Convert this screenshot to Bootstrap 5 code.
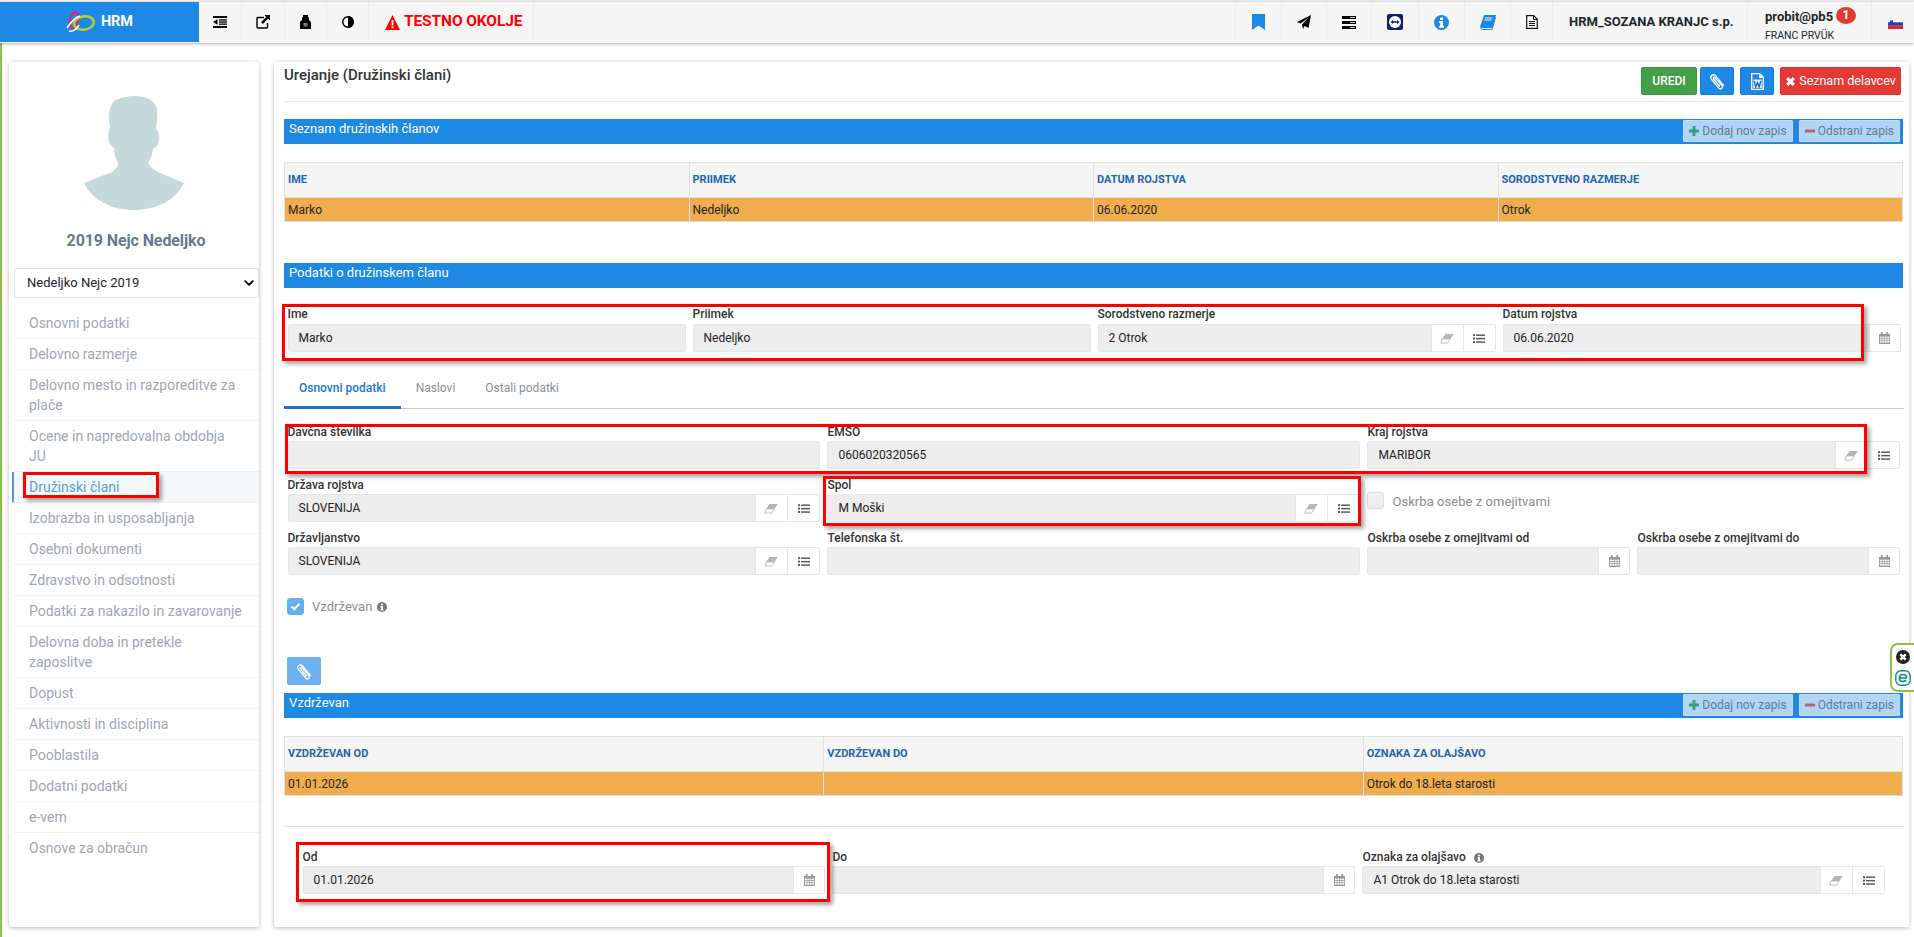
<!DOCTYPE html>
<html lang="sl">
<head>
<meta charset="utf-8">
<title>HRM</title>
<link href="https://cdn.jsdelivr.net/npm/bootstrap@5.3.0/dist/css/bootstrap.min.css" rel="stylesheet">
<style>
html,body{height:100%;overflow:hidden}
body{font-family:Roboto,"Liberation Sans",sans-serif;font-size:12px;color:#212529;background:#fff;padding-top:2px;position:relative}
.edge-top{position:absolute;top:0;left:0;right:0;height:2px;background:#ececec}
.topbar{height:41px;background:#f5f5f5;box-shadow:0 1px 3px rgba(0,0,0,.3);position:relative;z-index:3}
.brand{width:199px;height:40px;background:#1e88e5;color:#fff;font-weight:700;font-size:14.5px;letter-spacing:-.2px;gap:6px;padding-left:66px}
.tool{height:40px;border-right:1px solid #ebebeb;flex:none}
.w43{width:43px}.w42{width:42px}.w45{width:45px}.w46{width:46px}.w47{width:47px}
.warn{width:165px;color:#f00;font-weight:700;font-size:15.5px;gap:4px;padding-left:16px;letter-spacing:-.1px}
.firm{width:195px;font-weight:700;font-size:13px;padding-left:16px;white-space:nowrap}
.usr{width:124px;padding-left:17px;line-height:1;position:relative}
.usr b{font-size:13px;font-weight:700;display:block}
.usr span.who{font-size:10.5px;display:block;margin-top:8px}
.count{position:absolute;left:88px;top:5px;width:20px;height:17px;border-radius:50%;background:#e53935;color:#fff;font-size:12px;font-weight:700;line-height:17px;text-align:center}
.flagcell{width:42px;padding-left:16px;height:40px}
.shell{height:894px;padding:19px 5px 10px 7px;gap:15px;border-left:2px solid #8bc34a}
.sidecard,.maincard{background:#fff;box-shadow:0 1px 4px rgba(0,0,0,.28);height:865px;position:relative;border-radius:2px}
.sidecard{width:250px;flex:none;padding-top:34px}
.maincard{width:1635px;flex:none;padding:0 5px 0 10px}
.avatar{display:block;width:100px;height:114px;margin-left:75px}
.pname{font-size:16px;font-weight:700;color:#69778c;text-align:center;margin:20px 0 0;line-height:22px;letter-spacing:-.1px;padding-left:4px}
.staff{width:245px;height:30px;margin:16px 0 10px 5px;font-size:13px;padding:0 20px 0 12px;border-radius:2px;border-color:#dfe5ea;color:#212529;--bs-form-select-bg-img:none;background-image:url("data:image/svg+xml,%3csvg xmlns='http://www.w3.org/2000/svg' viewBox='0 0 16 16'%3e%3cpath fill='none' stroke='%23000' stroke-linecap='round' stroke-linejoin='round' stroke-width='3' d='m2 5 6 6 6-6'/%3e%3c/svg%3e");background-size:10px 10px;background-position:right 4px center}
.menu{margin-left:5px;border-radius:0}
.menu a{display:block;padding:5px 17px 5px 15px;line-height:20px;font-size:14px;color:#a0a6b4;text-decoration:none;border:0;border-bottom:1px solid #f1f1f1;background:transparent}
.menu a.current{color:#5b9bd5;background:#f5f8fb;border-left:2px solid #5b9bd5;margin-left:-2px}
.pagehead{height:40px;border-bottom:1px solid #e6e6e6;padding-right:3px}
.pagehead h1{font-size:15px;font-weight:500;color:#333;margin:5px 0 0;line-height:16px}
.acts{gap:6px;padding-top:5px}
.act{height:28px;padding:0;border-radius:2px;color:#fff;font-size:12px;border:1px solid transparent;display:inline-flex;align-items:center;justify-content:center}
.a-green{background:#43a047;width:56px;font-weight:500;border-color:#3d9441;margin-right:-3px}
.a-blue{background:#1e88e5;width:34px;border-color:#1b7ed6}
.a-red{background:#e53935;width:121px;border-color:#dd3430;gap:3px;font-size:12.5px}
.bar{height:25px;background:#1e88e5;color:#fff;font-size:13px;padding:0 3px 0 5px;line-height:20px;margin-right:1px}
.b1{margin-top:17px}.b2{margin-top:41px}.b3{margin-top:8px}
.barbtns{gap:6px;padding-top:1px}
.minibtn{height:22px;padding:0 5px;background:#b1d5f6;border:1px solid #c6dcf2;color:#5d7c99;font-size:12px;line-height:20px;border-radius:1px;gap:3px}
.minibtn:disabled{opacity:1;color:#5d7c99;background:#b1d5f6;border-color:#c6dcf2}
.grid-t{margin:18px 0 0;width:calc(100% - 1px);table-layout:fixed;border-color:#e0e0e0;font-size:12px;--bs-table-bg:transparent}
.grid-t th,.grid-t td{border:1px solid #e0e0e0;padding:0 3px;vertical-align:middle}
.grid-t th{height:35px;background:#f5f5f5;color:#1e65ad;font-size:11px;font-weight:700;text-transform:uppercase}
.grid-t td{height:24px;background:#f0ad4e;color:#222}
.fldrow{--bs-gutter-x:7px;margin-left:0;margin-right:0}
.fldrow>div{padding-bottom:8px}
.r1{margin-top:18px}
.r1>div{padding-bottom:0}
.r5{margin:0 15px}
.fld{font-size:12px;font-weight:500;color:#333;margin:0;display:block;line-height:17px;height:17px;white-space:nowrap}
.r1 .fld{height:18px}
.inp{height:28px;min-height:0;background:#ededed;border:1px solid #e2e7eb;border-radius:2px;font-size:12px;color:#222;padding:0 10px;line-height:26px}
.addon{width:33px;height:28px;padding:0;justify-content:center;background:#fff;border:1px solid #e2e7eb;border-radius:2px;flex:none}
.cal{width:32px}
.tabsx{margin-top:17px;border-bottom:1px solid #c8c8c8;margin-bottom:15px;height:40px}
.tabsx .nav-link{border:0;border-radius:0;height:39px;padding:11px 15px 0;color:#8a8f96;font-size:12px;background:transparent;margin:0;line-height:16px}
.tabsx .nav-link.active{color:#1976d2;font-weight:500;background:transparent;border-bottom:3px solid #1976d2;height:40px}
.chk{width:17px;height:17px;border-radius:3px;border:1px solid #ddd;background:#eee;flex:none;display:flex;align-items:center;justify-content:center}
.chk.on{background:#66aeee;border-color:#66aeee}
.chkl{color:#8c8c8c;font-size:13px;margin-left:8px;gap:5px;letter-spacing:.05px}
.oskrba{padding-top:15px}
.vz{margin:15px 0 0 3px;height:17px}
.clipb{width:34px;height:28px;margin:42px 0 0 3px;background:#1e88e5;display:flex;opacity:.65;border-radius:2px;border:0;align-items:center;justify-content:center;padding:0}
.clipb:disabled{background:#1e88e5;opacity:.65}
.sep{margin:30px 0 22px;border:0;border-top:1px solid #e4e4e4;opacity:1}
.ann{position:absolute;border:3px solid #f00;box-shadow:3px 3px 4px rgba(0,0,0,.35);pointer-events:none;z-index:2}
.ann-a{left:8px;top:242px;width:1582px;height:57px}
.ann-b{left:11px;top:362px;width:1582px;height:50px}
.ann-c{left:549px;top:414px;width:538px;height:50px}
.ann-d{left:22px;top:780px;width:534px;height:60px}
.ann-e{left:14px;top:410px;width:136px;height:26px}
.esetwin{position:absolute;right:0;top:643px;width:24px;height:49px;background:#fff;border:2px solid #8bc34a;border-right:0;border-radius:8px 0 0 8px;z-index:4;gap:6px;padding-top:5px}
svg{display:block;flex:none}
</style>
</head>
<body>
<svg width="0" height="0" class="position-absolute">
<defs>
<symbol id="i-eraser" viewBox="0 0 16 12"><path d="M6 1h9l-4 5.5H2z" fill="#b5b5b5"/><path d="M2 6.5h9L8 11H.8z" fill="#fff" stroke="#b5b5b5" stroke-width=".9"/></symbol>
<symbol id="i-list" viewBox="0 0 14 12"><g fill="#555"><rect x="0" y="1" width="2.4" height="2.2"/><rect x="0" y="5" width="2.4" height="2.2"/><rect x="0" y="9" width="2.4" height="2.2"/><rect x="3.6" y="1.3" width="10.4" height="1.7"/><rect x="3.6" y="5.3" width="10.4" height="1.7"/><rect x="3.6" y="9.3" width="10.4" height="1.7"/></g></symbol>
<symbol id="i-cal" viewBox="0 0 12 13"><path fill="#999" d="M0 2h2V0h2v2h4V0h2v2h2v11H0z"/><g fill="#fff"><rect x="1" y="5" width="2" height="1.6"/><rect x="3.7" y="5" width="2" height="1.6"/><rect x="6.4" y="5" width="2" height="1.6"/><rect x="9.1" y="5" width="2" height="1.6"/><rect x="1" y="7.4" width="2" height="1.6"/><rect x="3.7" y="7.4" width="2" height="1.6"/><rect x="6.4" y="7.4" width="2" height="1.6"/><rect x="9.1" y="7.4" width="2" height="1.6"/><rect x="1" y="9.8" width="2" height="1.8"/><rect x="3.7" y="9.8" width="2" height="1.8"/><rect x="6.4" y="9.8" width="2" height="1.8"/><rect x="9.1" y="9.8" width="2" height="1.8"/></g></symbol>
<symbol id="i-clip" viewBox="0 0 16 16"><path fill="none" stroke="#fff" stroke-width="1.3" stroke-linecap="round" d="M13.6 11.6 6.4 2.9C5.2 1.4 3.6 1.4 2.6 2.2s-1.3 2.4-.2 3.8l6.6 8c.8 1 2 1.2 2.9.5s1-1.9.2-2.9L5.8 4.6c-.4-.5-1-.6-1.4-.3s-.4.9 0 1.400l5.400 6.500"/></symbol>
<symbol id="i-info" viewBox="0 0 16 16"><circle cx="8" cy="8" r="8" fill="currentColor"/><rect x="6.4" y="2.6" width="3.2" height="2.7" rx=".4" fill="#fff"/><path fill="#fff" d="M5.5 6.5h4.1v5h1v2h-5v-2h1v-3h-1.1z"/></symbol>
</defs>
</svg>
<div class="edge-top"></div>
<nav class="topbar d-flex align-items-start">
  <a class="brand d-flex align-items-center text-decoration-none">
    <svg width="29" height="22" viewBox="0 0 29 22"><ellipse cx="8" cy="9" rx="4" ry="8" fill="none" stroke="#e91e63" stroke-width="2.2" transform="rotate(12 8 9)"/><ellipse cx="18" cy="12" rx="10" ry="6.6" fill="none" stroke="#b5cf32" stroke-width="2.6" transform="rotate(-8 18 12)"/><path d="M1 17c4-6 9-11 13-12M3 20c4 1 8-2 10-6" fill="none" stroke="#fff" stroke-width="1.6"/></svg>
    <span>HRM</span>
  </a>
  <div class="tool w43 d-flex align-items-center justify-content-center"><svg width="14" height="12" viewBox="0 0 14 12"><g fill="#000"><rect width="14" height="2"/><rect x="6" y="3.3" width="8" height="1.3"/><rect x="6" y="5.4" width="8" height="1.3"/><rect x="6" y="7.5" width="8" height="1.3"/><rect y="10" width="14" height="2"/><path d="M4.5 3.3v5.5L0 6z"/></g></svg></div>
  <div class="tool w43 d-flex align-items-center justify-content-center"><svg width="14" height="14" viewBox="0 0 14 14"><path d="M8 2.5H2a1 1 0 0 0-1 1V12a1 1 0 0 0 1 1h8.5a1 1 0 0 0 1-1V8" fill="none" stroke="#000" stroke-width="1.4"/><path d="M8.5 0H14v5.5l-1.9-1.8L6.8 9 5 7.2l5.3-5.3z" fill="#000"/></svg></div>
  <div class="tool w42 d-flex align-items-center justify-content-center"><svg width="11" height="14" viewBox="0 0 11 14"><path d="M3 0h5v2l1 .8V5l2 2v7H0V7l2-2V2.800L3 2z" fill="#000"/><rect x="3.5" y="8" width="4" height="3.500" fill="#777"/></svg></div>
  <div class="tool w42 d-flex align-items-center justify-content-center"><svg width="12" height="12" viewBox="0 0 12 12"><circle cx="6" cy="6" r="5.200" fill="#fff" stroke="#000" stroke-width="1.400"/><path d="M6 0a6 6 0 0 1 0 12z" fill="#000"/></svg></div>
  <div class="tool warn d-flex align-items-center"><svg width="15" height="15" viewBox="0 0 15 15"><path d="M7.500 0 15 15H0z" fill="#f00"/><rect x="6.600" y="5" width="1.800" height="5.500" fill="#fff"/><rect x="6.600" y="11.500" width="1.800" height="1.800" fill="#fff"/></svg><span>TESTNO OKOLJE</span></div>
  <div class="tool flex-grow-1"></div>
  <div class="tool w46 d-flex align-items-center justify-content-center"><svg width="13" height="16" viewBox="0 0 13 16"><path d="M0 0h13v16l-6.500-4.500L0 16z" fill="#1e88e5"/></svg></div>
  <div class="tool w45 d-flex align-items-center justify-content-center"><svg width="14" height="14" viewBox="0 0 14 14"><path d="M14 0 11.500 13 7.500 11 6 14 5 9.500 11 3 3.500 8.500 0 7z" fill="#000"/></svg></div>
  <div class="tool w45 d-flex align-items-center justify-content-center"><svg width="14" height="13" viewBox="0 0 14 13"><g fill="#000"><rect width="14" height="3"/><rect y="5" width="14" height="3"/><rect y="10" width="14" height="3"/></g><g fill="#ccc"><rect x="8" y="1" width="5" height="1"/><rect x="8" y="6" width="5" height="1"/><rect x="8" y="11" width="5" height="1"/></g></svg></div>
  <div class="tool w47 d-flex align-items-center justify-content-center"><svg width="16" height="16" viewBox="0 0 16 16"><rect width="16" height="16" rx="2" fill="#0e1f6b"/><circle cx="8" cy="8" r="6" fill="#fff"/><path d="M3.500 8 6 6v1.300h4V6l2.500 2L10 10V8.700H6V10z" fill="#0e1f6b"/></svg></div>
  <div class="tool w46 d-flex align-items-center justify-content-center text-primary"><svg width="15" height="15" style="color:#1e88e5"><use href="#i-info"/></svg></div>
  <div class="tool w46 d-flex align-items-center justify-content-center"><svg width="16" height="15" viewBox="0 0 16 15"><path d="M4 0h12l-3 11.500a2 2 0 0 1-2 1.500H1.500C.500 13 0 12 .300 11z" fill="#1e88e5"/><path d="M.500 12.500c0 1 .6 2 1.800 2H12l3.500-12" fill="none" stroke="#1e88e5" stroke-width="1"/><path d="M5 3h7M4.500 5h7" stroke="#fff" stroke-width=".9"/></svg></div>
  <div class="tool w42 d-flex align-items-center justify-content-center"><svg width="12" height="14" viewBox="0 0 12 14"><path d="M.7.700h7L11.300 4.300v9H.7z" fill="#fff" stroke="#111" stroke-width="1.200"/><path d="M7.500 1v3.500H11" fill="none" stroke="#111"/><path d="M3 6.500h6M3 8.500h6M3 10.500h6" stroke="#111"/></svg></div>
  <div class="tool firm d-flex align-items-center">HRM_SOZANA KRANJC s.p.</div>
  <div class="tool usr pt-2">
    <b>probit@pb5</b><span class="who">FRANC PRVÜK</span>
    <span class="count">1</span>
  </div>
  <div class="flagcell d-flex align-items-center"><svg class="mt-1" width="15" height="10" viewBox="0 0 15 10"><rect width="15" height="3.400" fill="#f4f4ff"/><rect y="3.300" width="15" height="3.400" fill="#1c3fbf"/><rect y="6.600" width="15" height="3.400" fill="#e8222c"/><path d="M2 1.500h3v3L3.500 5.500 2 4.500z" fill="#1c3fbf"/></svg></div>
</nav>

<div class="shell d-flex">
  <aside class="sidecard">
    <svg class="avatar" viewBox="0 0 100 114"><path fill="#c5d9dc" d="M50 0C62 0 72 4 73 14 74 22 72 30 72 33 76 36 76 48 72 51 70 52 70 52 69 53 68 60 66 64 64 67 66 71 70 74 74 76L100 87C92 104 72 114 50 114 28 114 8 104 0 87L28 76C31 73 35 70 34 67 32 63 30 58 30 52 26 50 24 45 24 40 24 36 26 33 26 31 24 20 25 8 32 4 38 1 44 0 50 0Z"/></svg>
    <h2 class="pname">2019 Nejc Nedeljko</h2>
    <select class="form-select staff"><option>Nedeljko Nejc 2019</option></select>
    <div class="list-group menu">
      <a href="#">Osnovni podatki</a>
      <a href="#">Delovno razmerje</a>
      <a href="#">Delovno mesto in razporeditve za plače</a>
      <a href="#">Ocene in napredovalna obdobja JU</a>
      <a href="#" class="current">Družinski člani</a>
      <a href="#">Izobrazba in usposabljanja</a>
      <a href="#">Osebni dokumenti</a>
      <a href="#">Zdravstvo in odsotnosti</a>
      <a href="#">Podatki za nakazilo in zavarovanje</a>
      <a href="#">Delovna doba in pretekle zaposlitve</a>
      <a href="#">Dopust</a>
      <a href="#">Aktivnosti in disciplina</a>
      <a href="#">Pooblastila</a>
      <a href="#">Dodatni podatki</a>
      <a href="#">e-vem</a>
      <a href="#" class="border-0">Osnove za obračun</a>
    </div>
    <div class="ann ann-e"></div>
  </aside>

  <main class="maincard">
    <div class="pagehead d-flex justify-content-between">
      <h1>Urejanje (Družinski člani)</h1>
      <div class="acts d-flex">
        <button class="btn act a-green">UREDI</button>
        <button class="btn act a-blue"><svg width="17" height="17"><use href="#i-clip"/></svg></button>
        <button class="btn act a-blue"><svg width="13" height="17" viewBox="0 0 13 17"><path d="M.7.700h8l3.600 3.600v12H.7z" fill="#1e88e5" stroke="#fff" stroke-width="1.300"/><path d="M8 1v4h4z" fill="#fff"/><rect x="2.200" y="6.500" width="8.600" height="8.500" fill="#d8ebfb"/><path d="m3.200 8 1.600 6 1.700-4.500L8.200 14l1.600-6" fill="none" stroke="#0f5fae" stroke-width="1.200"/></svg></button>
        <button class="btn act a-red"><svg width="11" height="11" viewBox="0 0 10 10"><path d="M1 3 3 1l2 2 2-2 2 2-2 2 2 2-2 2-2-2-2 2-2-2 2-2z" fill="#fff"/></svg>Seznam delavcev</button>
      </div>
    </div>

    <div class="bar b1 d-flex justify-content-between">
      <span>Seznam družinskih članov</span>
      <div class="barbtns d-flex">
        <button disabled class="btn minibtn d-flex align-items-center"><svg width="10" height="10" viewBox="0 0 10 10"><path d="M3.600 0h2.800v3.600H10v2.800H6.400V10H3.600V6.400H0V3.600h3.600z" fill="#3a9a7a"/></svg>Dodaj nov zapis</button>
        <button disabled class="btn minibtn d-flex align-items-center"><svg width="10" height="4" viewBox="0 0 10 4"><rect width="10" height="3" y=".5" fill="#b4647c"/></svg>Odstrani zapis</button>
      </div>
    </div>
    <table class="table grid-t mb-0">
      <thead><tr><th>Ime</th><th>Priimek</th><th>Datum rojstva</th><th>Sorodstveno razmerje</th></tr></thead>
      <tbody><tr><td>Marko</td><td>Nedeljko</td><td>06.06.2020</td><td>Otrok</td></tr></tbody>
    </table>

    <div class="bar b2">Podatki o družinskem članu</div>

    <div class="row fldrow r1">
      <div class="col-3"><label class="fld">Ime</label><div class="form-control inp">Marko</div></div>
      <div class="col-3"><label class="fld">Priimek</label><div class="form-control inp">Nedeljko</div></div>
      <div class="col-3"><label class="fld">Sorodstveno razmerje</label>
        <div class="input-group flex-nowrap"><div class="form-control inp">2 Otrok</div><span class="input-group-text addon"><svg width="15" height="11"><use href="#i-eraser"/></svg></span><span class="input-group-text addon"><svg width="12" height="11"><use href="#i-list"/></svg></span></div></div>
      <div class="col-3"><label class="fld">Datum rojstva</label>
        <div class="input-group flex-nowrap"><div class="form-control inp">06.06.2020</div><span class="input-group-text addon cal"><svg width="11" height="12"><use href="#i-cal"/></svg></span></div></div>
    </div>

    <ul class="nav nav-tabs tabsx">
      <li class="nav-item"><a class="nav-link active" href="#">Osnovni podatki</a></li>
      <li class="nav-item"><a class="nav-link" href="#">Naslovi</a></li>
      <li class="nav-item"><a class="nav-link" href="#">Ostali podatki</a></li>
    </ul>

    <div class="row fldrow">
      <div class="col-4"><label class="fld">Davčna številka</label><div class="form-control inp"></div></div>
      <div class="col-4"><label class="fld">EMŠO</label><div class="form-control inp">0606020320565</div></div>
      <div class="col-4"><label class="fld">Kraj rojstva</label>
        <div class="input-group flex-nowrap"><div class="form-control inp">MARIBOR</div><span class="input-group-text addon"><svg width="15" height="11"><use href="#i-eraser"/></svg></span><span class="input-group-text addon"><svg width="12" height="11"><use href="#i-list"/></svg></span></div></div>
      <div class="col-4"><label class="fld">Država rojstva</label>
        <div class="input-group flex-nowrap"><div class="form-control inp">SLOVENIJA</div><span class="input-group-text addon"><svg width="15" height="11"><use href="#i-eraser"/></svg></span><span class="input-group-text addon"><svg width="12" height="11"><use href="#i-list"/></svg></span></div></div>
      <div class="col-4"><label class="fld">Spol</label>
        <div class="input-group flex-nowrap"><div class="form-control inp">M Moški</div><span class="input-group-text addon"><svg width="15" height="11"><use href="#i-eraser"/></svg></span><span class="input-group-text addon"><svg width="12" height="11"><use href="#i-list"/></svg></span></div></div>
      <div class="col-4 oskrba d-flex align-items-start"><span class="chk"></span><span class="chkl d-flex">Oskrba osebe z omejitvami</span></div>
      <div class="col-4"><label class="fld">Državljanstvo</label>
        <div class="input-group flex-nowrap"><div class="form-control inp">SLOVENIJA</div><span class="input-group-text addon"><svg width="15" height="11"><use href="#i-eraser"/></svg></span><span class="input-group-text addon"><svg width="12" height="11"><use href="#i-list"/></svg></span></div></div>
      <div class="col-4"><label class="fld">Telefonska št.</label><div class="form-control inp"></div></div>
      <div class="col-2"><label class="fld">Oskrba osebe z omejitvami od</label>
        <div class="input-group flex-nowrap"><div class="form-control inp"></div><span class="input-group-text addon cal"><svg width="11" height="12"><use href="#i-cal"/></svg></span></div></div>
      <div class="col-2"><label class="fld">Oskrba osebe z omejitvami do</label>
        <div class="input-group flex-nowrap"><div class="form-control inp"></div><span class="input-group-text addon cal"><svg width="11" height="12"><use href="#i-cal"/></svg></span></div></div>
    </div>

    <div class="vz d-flex align-items-center"><span class="chk on"><svg width="11" height="9" viewBox="0 0 11 9"><path d="M1.500 4.500 4.300 7.200 9.500 1.700" fill="none" stroke="#fff" stroke-width="2.200"/></svg></span><span class="chkl d-flex align-items-center">Vzdrževan <svg width="10" height="10" style="color:#777"><use href="#i-info"/></svg></span></div>

    <button disabled class="btn clipb"><svg width="17" height="17"><use href="#i-clip"/></svg></button>

    <div class="bar b3 d-flex justify-content-between">
      <span>Vzdrževan</span>
      <div class="barbtns d-flex">
        <button disabled class="btn minibtn d-flex align-items-center"><svg width="10" height="10" viewBox="0 0 10 10"><path d="M3.600 0h2.800v3.600H10v2.800H6.400V10H3.600V6.400H0V3.600h3.600z" fill="#3a9a7a"/></svg>Dodaj nov zapis</button>
        <button disabled class="btn minibtn d-flex align-items-center"><svg width="10" height="4" viewBox="0 0 10 4"><rect width="10" height="3" y=".5" fill="#b4647c"/></svg>Odstrani zapis</button>
      </div>
    </div>
    <table class="table grid-t mb-0">
      <thead><tr><th>Vzdrževan od</th><th>Vzdrževan do</th><th>Oznaka za olajšavo</th></tr></thead>
      <tbody><tr><td>01.01.2026</td><td></td><td>Otrok do 18.leta starosti</td></tr></tbody>
    </table>

    <hr class="sep">

    <div class="row fldrow r5">
      <div class="col-4"><label class="fld">Od</label>
        <div class="input-group flex-nowrap"><div class="form-control inp">01.01.2026</div><span class="input-group-text addon cal"><svg width="11" height="12"><use href="#i-cal"/></svg></span></div></div>
      <div class="col-4"><label class="fld">Do</label>
        <div class="input-group flex-nowrap"><div class="form-control inp"></div><span class="input-group-text addon cal"><svg width="11" height="12"><use href="#i-cal"/></svg></span></div></div>
      <div class="col-4"><label class="fld d-flex align-items-center gap-2">Oznaka za olajšavo <svg width="10" height="10" style="color:#777"><use href="#i-info"/></svg></label>
        <div class="input-group flex-nowrap"><div class="form-control inp">A1 Otrok do 18.leta starosti</div><span class="input-group-text addon"><svg width="15" height="11"><use href="#i-eraser"/></svg></span><span class="input-group-text addon"><svg width="12" height="11"><use href="#i-list"/></svg></span></div></div>
    </div>

    <div class="ann ann-a"></div>
    <div class="ann ann-b"></div>
    <div class="ann ann-c"></div>
    <div class="ann ann-d"></div>
  </main>
</div>

<aside class="esetwin d-flex flex-column align-items-center">
  <svg width="14" height="14" viewBox="0 0 14 14"><circle cx="7" cy="7" r="7" fill="#222"/><path d="M3.500 5.200 5.200 3.500 7 5.300 8.800 3.500 10.500 5.200 8.700 7 10.500 8.800 8.800 10.500 7 8.700 5.200 10.500 3.500 8.800 5.300 7z" fill="#fff"/></svg>
  <svg width="16" height="16" viewBox="0 0 16 16"><rect x=".8" y=".8" width="14.400" height="14.400" rx="5" fill="#fff" stroke="#0d8c93" stroke-width="1.400"/><path d="M4.500 8h7c0-2.200-1.500-3.500-3.500-3.500S4.500 6 4.500 8s1.500 3.500 3.500 3.500c1.300 0 2.400-.5 3-1.500" fill="none" stroke="#0d8c93" stroke-width="1.700"/></svg>
</aside>
<script src="https://cdn.jsdelivr.net/npm/bootstrap@5.3.0/dist/js/bootstrap.bundle.min.js"></script>
</body>
</html>
